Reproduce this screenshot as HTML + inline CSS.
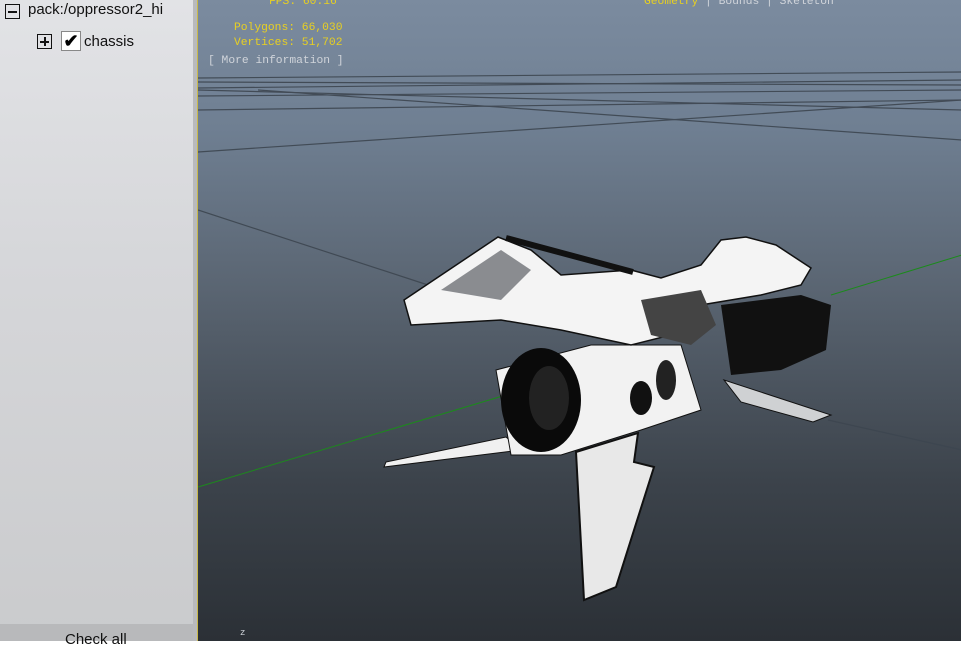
<!DOCTYPE html>
<html><head><style>
html,body{margin:0;padding:0;width:961px;height:641px;overflow:hidden;font-family:"Liberation Sans",sans-serif}
#left{position:absolute;left:0;top:0;width:193px;height:641px;background:linear-gradient(#e2e3e6,#d6d7da 40%,#cacbcd)}
#div{position:absolute;left:193px;top:0;width:4px;height:641px;background:#b9babd}
#vp{position:absolute;left:197px;top:0;width:764px;height:641px;background:linear-gradient(#7b8b9f 0%,#6f7f92 20%,#5a6572 45%,#3c434b 75%,#2b3036 100%);border-left:1px solid #c9b84a}
.mono{position:absolute;font-family:"Liberation Mono",monospace;font-size:11.3px;white-space:pre}
.y{color:#e8d021}.g{color:#d0d4da}
#bot{position:absolute;left:0;top:624px;width:193px;height:17px;background:#b8b9bb}
.box{position:absolute;width:13px;height:13px;border:1.5px solid #111}
</style></head><body>
<div id="left">
 <div class="box" style="left:5px;top:4px"><div style="position:absolute;left:2px;top:5.5px;width:9px;height:2px;background:#111"></div></div>
 <div style="position:absolute;left:28px;top:1px;font-size:15px;color:#111">pack:/oppressor2_hi</div>
 <div class="box" style="left:37px;top:34px"><div style="position:absolute;left:2px;top:5.5px;width:9px;height:2px;background:#111"></div><div style="position:absolute;left:5.5px;top:2px;width:2px;height:9px;background:#111"></div></div>
 <div style="position:absolute;left:61px;top:31px;width:18px;height:18px;border:1px solid #888;background:#fff;font-size:18px;line-height:18px;text-align:center;color:#000;font-weight:bold">✔</div>
 <div style="position:absolute;left:84px;top:33px;font-size:15px;color:#111">chassis</div>
</div>
<div id="bot"><div style="position:absolute;left:65px;top:7px;font-size:15px;color:#111">Check all</div></div>
<div id="div"></div>
<div id="vp">
<svg width="764" height="641" style="position:absolute;left:0;top:0">
<g stroke="#3d4650" stroke-width="1.2" fill="none" opacity=".9">
<line x1="0" y1="78" x2="764" y2="72"/><line x1="0" y1="82" x2="764" y2="85"/><line x1="0" y1="88" x2="764" y2="80"/>
<line x1="0" y1="96" x2="764" y2="90"/><line x1="0" y1="90" x2="764" y2="110"/><line x1="60" y1="90" x2="764" y2="140"/>
<line x1="0" y1="110" x2="764" y2="100"/><line x1="0" y1="152" x2="764" y2="100"/><line x1="0" y1="210" x2="230" y2="285"/>
<line x1="630" y1="420" x2="764" y2="450"/>
</g>
<line x1="0" y1="487" x2="348" y2="383" stroke="#1c8a1c" stroke-width="1"/>
<line x1="633" y1="295" x2="764" y2="255" stroke="#1c8a1c" stroke-width="1"/>
<g transform="translate(-197,0)">
<polygon points="583,600 575,452 637,433 633,462 653,467 615,587" fill="#e8e8e8" stroke="#111" stroke-width="2"/>
<polygon points="383,467 385,462 505,437 520,450" fill="#f0f0f0" stroke="#111"/>
<polygon points="723,380 830,415 812,422 740,402" fill="#cfd1d3" stroke="#111"/>
<polygon points="720,305 800,295 830,305 825,350 780,370 730,375" fill="#111"/>
<polygon points="495,370 590,345 680,345 700,410 640,430 560,455 510,455" fill="#f2f2f2" stroke="#111"/>
<ellipse cx="540" cy="400" rx="40" ry="52" fill="#0a0a0a"/>
<ellipse cx="548" cy="398" rx="20" ry="32" fill="#222"/>
<polygon points="403,300 497,237 530,250 560,275 630,270 660,278 700,265 720,240 745,237 775,245 810,268 800,285 760,295 700,305 670,335 630,345 560,330 500,320 410,325" fill="#f4f4f4" stroke="#111" stroke-width="1.5"/>
<polygon points="440,290 500,250 530,270 500,300" fill="#8a8c90"/>
<polygon points="640,300 700,290 715,325 690,345 650,335" fill="#444"/>
<line x1="505" y1="238" x2="632" y2="272" stroke="#111" stroke-width="6"/>
<ellipse cx="640" cy="398" rx="11" ry="17" fill="#111"/>
<ellipse cx="665" cy="380" rx="10" ry="20" fill="#222"/>
</g>
</svg>
<div class="mono y" style="left:71px;top:-4px">FPS: 60.16</div>
<div class="mono y" style="left:36px;top:22px">Polygons: 66,030</div>
<div class="mono y" style="left:36px;top:37px">Vertices: 51,702</div>
<div class="mono g" style="left:10px;top:55px">[ More information ]</div>
<div class="mono" style="left:446px;top:-4px"><span class="y">Geometry</span><span class="g"> | Bounds | Skeleton</span></div>
<div class="mono g" style="left:42px;top:628px;font-size:9px">z</div>
</div>
</body></html>
